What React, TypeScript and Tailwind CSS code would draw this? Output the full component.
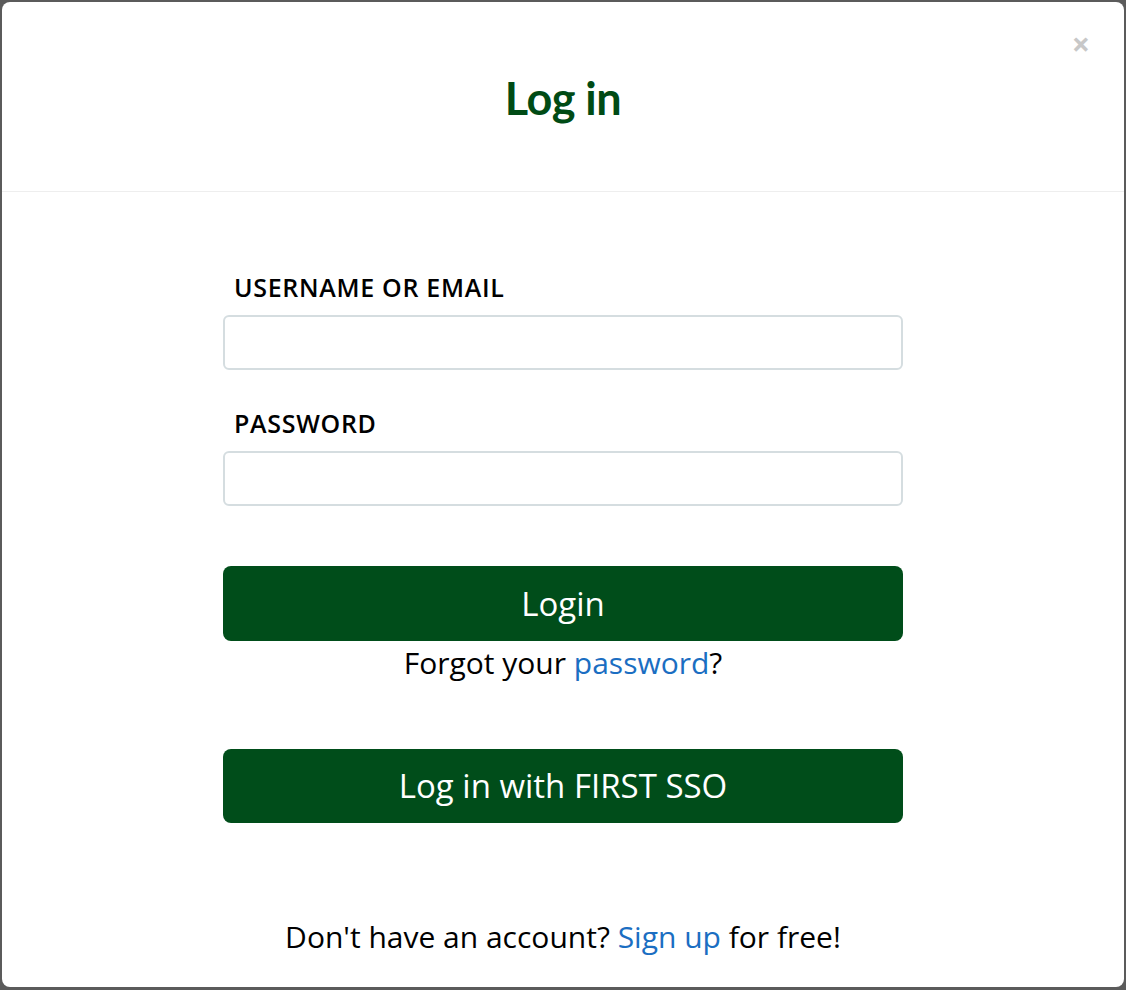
import React from "react";

export default function App() {
  return (
    <div className="w-[1126px] h-[990px] bg-[#5b5b5b] pt-[2px] px-[2px]" style={{ fontFamily: '"Open Sans", sans-serif' }}>
      <div className="relative h-[985px] bg-white rounded-[8px] flex flex-col">
        <div className="h-[190px] flex items-center justify-center border-b border-[#eeeeee] pt-[4px]">
          <h1 className="text-[45px] font-bold text-[#004b15] tracking-[-0.5px]" style={{ fontFamily: '"Lato", sans-serif' }}>Log in</h1>
        </div>
        <button className="absolute right-[34px] top-[26px] text-[#c8c8c8] text-[32px] font-bold leading-none">×</button>
        <div className="flex flex-col items-center pt-[79px]">
          <div className="w-[680px]">
            <label className="block pl-[11px] text-[25px] font-semibold tracking-[0.7px] text-black leading-[32px]">USERNAME OR EMAIL</label>
            <input className="mt-[12px] w-full h-[55px] border-2 border-[#d5dde0] rounded-[6px]" />
            <label className="block mt-[37px] pl-[11px] text-[25px] font-semibold tracking-[0.7px] text-black leading-[32px]">PASSWORD</label>
            <input type="password" className="mt-[12px] w-full h-[55px] border-2 border-[#d5dde0] rounded-[6px]" />
            <button className="mt-[60px] w-full h-[75px] bg-[#004d1a] rounded-[8px] text-white text-[33px]">Login</button>
            <p className="text-center text-[30px] leading-[44px] text-black">
              Forgot your <span className="text-[#1b6ec2]">password</span>?
            </p>
            <button className="mt-[64px] w-full h-[74px] bg-[#004d1a] rounded-[8px] text-white text-[33px]">Log in with FIRST SSO</button>
            <p className="mt-[92px] text-center text-[30px] leading-[44px] text-black">
              Don't have an account? <span className="text-[#1b6ec2]">Sign up</span> for free!
            </p>
          </div>
        </div>
      </div>
    </div>
  );
}
